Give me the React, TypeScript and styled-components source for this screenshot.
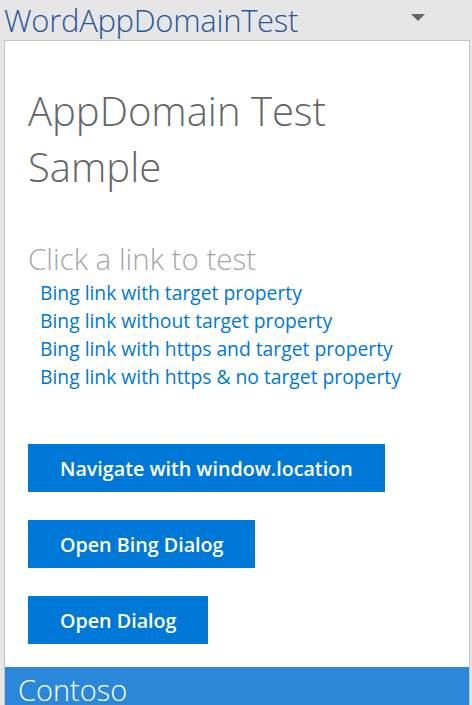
import React from 'react';
import styled, { createGlobalStyle } from 'styled-components';

const GlobalStyle = createGlobalStyle`
  html, body {
    margin: 0;
    padding: 0;
    height: 705px;
    overflow: hidden;
    background: #e6e6e6;
    font-family: "Open Sans", "Noto Sans", sans-serif;
  }
`;

const Frame = styled.div`
  display: flex;
  flex-direction: column;
  height: 705px;
`;

const TitleBar = styled.div`
  display: flex;
  align-items: center;
  justify-content: space-between;
  height: 40px;
  padding: 0 47px 0 4px;
`;

const AddinTitle = styled.div`
  font-size: 31px;
  font-weight: 300;
  line-height: 38px;
  color: #2b579a;
  letter-spacing: -0.3px;
`;

const Caret = styled.div`
  width: 0;
  height: 0;
  margin-bottom: 5px;
  border-left: 7px solid transparent;
  border-right: 7px solid transparent;
  border-top: 7px solid #666666;
`;

const Pane = styled.div`
  flex: 1;
  display: flex;
  flex-direction: column;
  margin: 0 2px 0 4px;
  border: 1px solid #c6c6c6;
  border-bottom: none;
  background: #ffffff;
  overflow: hidden;
`;

const Content = styled.div`
  padding: 42px 0 23px 23px;
`;

const Heading = styled.h1`
  margin: 0;
  font-size: 40px;
  font-weight: 300;
  line-height: 56px;
  color: #666666;
  width: 330px;
`;

const SubHeading = styled.h2`
  margin: 44px 0 0;
  font-size: 29.5px;
  font-weight: 300;
  line-height: 40px;
  color: #a6a6a6;
`;

const LinkList = styled.div`
  display: flex;
  flex-direction: column;
  padding-left: 12px;
`;

const BingLink = styled.a`
  font-size: 19.3px;
  line-height: 28px;
  color: #0078d7;
  text-decoration: none;
`;

const Buttons = styled.div`
  display: flex;
  flex-direction: column;
  align-items: flex-start;
  gap: 28px;
  margin-top: 53px;
`;

const Button = styled.button`
  height: 48px;
  padding: 0 32px;
  border: none;
  background: #0078d7;
  color: #ffffff;
  font-family: "Open Sans", "Noto Sans", sans-serif;
  font-size: 19.7px;
  font-weight: 600;
  cursor: pointer;
`;

const Footer = styled.div`
  flex: 1;
  padding-left: 13px;
  background: #2b88d8;
  color: #ffffff;
  font-size: 29px;
  font-weight: 300;
  line-height: 46px;
`;

const links = [
  'Bing link with target property',
  'Bing link without target property',
  'Bing link with https and target property',
  'Bing link with https & no target property',
];

const buttons = ['Navigate with window.location', 'Open Bing Dialog', 'Open Dialog'];

const App: React.FC = () => (
  <Frame>
    <GlobalStyle />
    <TitleBar>
      <AddinTitle>WordAppDomainTest</AddinTitle>
      <Caret />
    </TitleBar>
    <Pane>
      <Content>
        <Heading>AppDomain Test Sample</Heading>
        <SubHeading>Click a link to test</SubHeading>
        <LinkList>
          {links.map(label => (
            <BingLink key={label} href="#">{label}</BingLink>
          ))}
        </LinkList>
        <Buttons>
          {buttons.map(label => (
            <Button key={label}>{label}</Button>
          ))}
        </Buttons>
      </Content>
      <Footer>Contoso</Footer>
    </Pane>
  </Frame>
);

export default App;
